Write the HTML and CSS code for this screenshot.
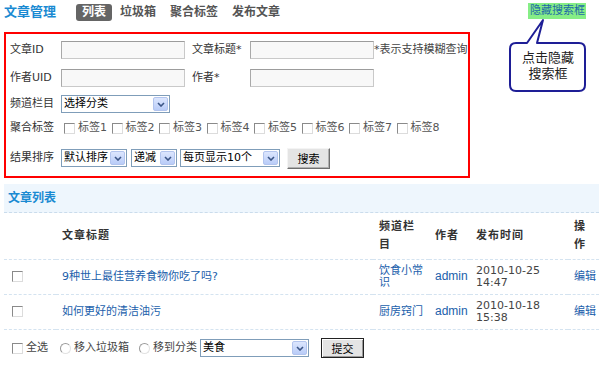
FILE: index.html
```html
<!DOCTYPE html>
<html lang="zh-CN">
<head>
<meta charset="utf-8">
<title>文章管理</title>
<link rel="stylesheet" href="styles.css">
</head>
<body>
<div class="page">
  <header class="topbar">
    <h1 class="title">文章管理</h1>
    <nav class="tabs">
      <a class="tab active">列表</a>
      <a class="tab">垃圾箱</a>
      <a class="tab">聚合标签</a>
      <a class="tab">发布文章</a>
    </nav>
    <a class="toggle">隐藏搜索框</a>
  </header>

  <form class="search">
    <div class="frow r1">
      <label class="flabel">文章ID</label>
      <input class="text" type="text">
      <label class="flabel2">文章标题*</label>
      <input class="text" type="text">
      <span class="hint">*表示支持模糊查询</span>
    </div>
    <div class="frow r2">
      <label class="flabel">作者UID</label>
      <input class="text" type="text">
      <label class="flabel2">作者*</label>
      <input class="text" type="text">
    </div>
    <div class="frow r3">
      <label class="flabel">频道栏目</label>
      <span class="select w109"><span class="select-text">选择分类</span><span class="select-arrow"><svg width="8" height="5" viewBox="0 0 8 5"><path d="M1 1 L4 4 L7 1" fill="none" stroke="#3b5586" stroke-width="1.6"/></svg></span></span>
    </div>
    <div class="frow r4">
      <label class="flabel">聚合标签</label>
      <span class="tags">
        <span class="tag"><input type="checkbox" class="cb">标签1</span>
        <span class="tag"><input type="checkbox" class="cb">标签2</span>
        <span class="tag"><input type="checkbox" class="cb">标签3</span>
        <span class="tag"><input type="checkbox" class="cb">标签4</span>
        <span class="tag"><input type="checkbox" class="cb">标签5</span>
        <span class="tag"><input type="checkbox" class="cb">标签6</span>
        <span class="tag"><input type="checkbox" class="cb">标签7</span>
        <span class="tag"><input type="checkbox" class="cb">标签8</span>
      </span>
    </div>
    <div class="frow r5">
      <label class="flabel">结果排序</label>
      <span class="select w66"><span class="select-text">默认排序</span><span class="select-arrow"><svg width="8" height="5" viewBox="0 0 8 5"><path d="M1 1 L4 4 L7 1" fill="none" stroke="#3b5586" stroke-width="1.6"/></svg></span></span>
      <span class="select w46 gap4"><span class="select-text">递减</span><span class="select-arrow"><svg width="8" height="5" viewBox="0 0 8 5"><path d="M1 1 L4 4 L7 1" fill="none" stroke="#3b5586" stroke-width="1.6"/></svg></span></span>
      <span class="select w100 gap3"><span class="select-text">每页显示10个</span><span class="select-arrow"><svg width="8" height="5" viewBox="0 0 8 5"><path d="M1 1 L4 4 L7 1" fill="none" stroke="#3b5586" stroke-width="1.6"/></svg></span></span>
      <button class="btn search-btn" type="button">搜索</button>
    </div>
  </form>

  <div class="callout">
    <svg class="callout-shape" width="80" height="76" viewBox="0 0 80 76">
      <path d="M8 25 L19 25 L35 2 L29 25 L71 25 Q77 25 77 31 L77 67 Q77 73 71 73 L8 73 Q2 73 2 67 L2 31 Q2 25 8 25 Z" fill="#fff" stroke="#1e1e96" stroke-width="2" stroke-linejoin="round"/>
    </svg>
    <p class="callout-text">点击隐藏搜索框</p>
  </div>

  <section class="list">
    <h2 class="list-title">文章列表</h2>
    <table class="grid">
      <colgroup>
        <col class="c1"><col class="c2"><col class="c3"><col class="c4"><col class="c5"><col class="c6">
      </colgroup>
      <thead>
        <tr>
          <th class="cbcell"></th>
          <th>文章标题</th>
          <th class="narrow">频道栏目</th>
          <th>作者</th>
          <th>发布时间</th>
          <th class="tight">操作</th>
        </tr>
      </thead>
      <tbody>
        <tr>
          <td class="cbcell"><input type="checkbox" class="cb"></td>
          <td><a class="link">9种世上最佳营养食物你吃了吗?</a></td>
          <td class="narrow"><a class="link">饮食小常识</a></td>
          <td><a class="link latin">admin</a></td>
          <td class="date">2010-10-25 14:47</td>
          <td class="tight"><a class="link">编辑</a></td>
        </tr>
        <tr>
          <td class="cbcell"><input type="checkbox" class="cb"></td>
          <td><a class="link">如何更好的清洁油污</a></td>
          <td class="narrow"><a class="link">厨房窍门</a></td>
          <td><a class="link latin">admin</a></td>
          <td class="date">2010-10-18 15:38</td>
          <td class="tight"><a class="link">编辑</a></td>
        </tr>
      </tbody>
    </table>

    <div class="actions">
      <label class="act a1"><input type="checkbox" class="cb">全选</label>
      <label class="act a2"><input type="radio" name="op" class="rd">移入垃圾箱</label>
      <label class="act a3"><input type="radio" name="op" class="rd">移到分类</label>
      <span class="select w109"><span class="select-text">美食</span><span class="select-arrow"><svg width="8" height="5" viewBox="0 0 8 5"><path d="M1 1 L4 4 L7 1" fill="none" stroke="#3b5586" stroke-width="1.6"/></svg></span></span>
      <button class="btn submit-btn" type="button">提交</button>
    </div>
  </section>
</div>
</body>
</html>
```

FILE: styles.css
```css
* { box-sizing: border-box; }

body {
  margin: 0;
  font-family: "DejaVu Sans", "Noto Sans CJK SC", sans-serif;
  font-size: 11px;
  line-height: 14px;
  color: #333;
  background: #fff;
}

.page {
  position: relative;
  width: 599px;
  padding-left: 4px;
}

/* top bar */
.topbar {
  display: flex;
  align-items: center;
  height: 24px;
  padding-right: 13px;
}

.title {
  margin: 0 20px 0 0;
  font-size: 13px;
  font-weight: bold;
  line-height: 18px;
  color: #1a8ad2;
}

.tabs {
  display: flex;
  gap: 2px;
}

.tab {
  display: block;
  padding: 0 6px;
  height: 17px;
  line-height: 17px;
  font-size: 12px;
  font-weight: bold;
  color: #555;
  border-radius: 3px;
}

.tab.active {
  background: #656565;
  color: #fff;
}

.toggle {
  margin-left: auto;
  align-self: flex-start;
  margin-top: 3px;
  padding: 0 1px 0 2px;
  height: 16px;
  line-height: 16px;
  font-size: 11px;
  color: #1d6aa8;
  background: #86ee86;
}

/* search box */
.search {
  margin: 8px 0 0;
  width: 466px;
  height: 146px;
  border: 2px solid #f00;
  padding-left: 4px;
}

.frow {
  display: flex;
  align-items: center;
  height: 20px;
}
.r1 { margin-top: 6px; }
.r2 { margin-top: 8px; }
.r3 { margin-top: 6px; }
.r4 { margin-top: 4px; }
.r5 { margin-top: 9px; height: 22px; }

.flabel {
  width: 51px;
  flex: none;
}

.flabel2 {
  width: 58px;
  margin-left: 7px;
  flex: none;
}

.text {
  width: 124px;
  height: 18px;
  margin: 0;
  padding: 0 2px;
  border: 1px solid #c9c9c9;
  border-top-color: #9c9c9c;
  border-left-color: #a9a9a9;
  background: #f8f8f8;
  font: inherit;
}

.hint {
  white-space: nowrap;
  color: #444;
}

/* selects */
.select {
  display: inline-flex;
  height: 18px;
  border: 1px solid #7f9db9;
  background: #fff;
  flex: none;
}
.w109 { width: 109px; }
.w66 { width: 66px; }
.w46 { width: 46px; }
.w100 { width: 100px; }
.gap4 { margin-left: 4px; }
.gap3 { margin-left: 3px; }

.select-text {
  flex: 1;
  padding-left: 2px;
  line-height: 16px;
  color: #000;
  white-space: nowrap;
  overflow: hidden;
}

.select-arrow {
  display: flex;
  align-items: center;
  justify-content: center;
  width: 15px;
  margin: 1px;
  border-radius: 2px;
  background: linear-gradient(#dce6fe, #b9ccf8);
  border: 1px solid #b2c4ee;
}

/* checkboxes and radios */
.cb, .rd {
  appearance: none;
  -webkit-appearance: none;
  width: 11px;
  height: 11px;
  margin: 0;
  background: #fff;
  border: 1px solid;
  border-color: #8a8a8a #dcdcdc #dcdcdc #8a8a8a;
  flex: none;
}
.rd { border-radius: 50%; border-color: #9a9a9a #e2e2e2 #e2e2e2 #9a9a9a; }

.tags {
  display: flex;
  align-items: center;
  margin-left: 3px;
}

.tag {
  display: inline-flex;
  align-items: center;
  margin-right: 4.5px;
  color: #555;
}
.tag .cb { margin-right: 3px; }

/* buttons */
.btn {
  margin: 0;
  padding: 0;
  font-family: "Noto Sans CJK SC", sans-serif;
  font-size: 11px;
  color: #000;
  background: #e4e4e4;
  flex: none;
}

.search-btn {
  margin-left: 7px;
  width: 43px;
  height: 21px;
  border: 1px solid;
  border-color: #f4f4f4 #6f6f6f #6f6f6f #f4f4f4;
  box-shadow: inset -1px -1px 0 #b0b0b0;
}

.submit-btn {
  margin-left: 12px;
  width: 43px;
  height: 20px;
  border: 1px solid #222;
  box-shadow: inset 1px 1px 0 #fff, inset -1px -1px 0 #999;
}

/* callout */
.callout {
  position: absolute;
  left: 508px;
  top: 18px;
  width: 80px;
  height: 76px;
  display: grid;
}
.callout-shape, .callout-text { grid-area: 1 / 1; }
.callout-text {
  justify-self: center;
  width: 56px;
  margin: 31px 0 0;
  text-align: center;
  font-family: "Noto Sans CJK SC", sans-serif;
  font-size: 13px;
  line-height: 16px;
  color: #222;
}

/* list */
.list { margin-top: 6px; }

.list-title {
  margin: 0;
  height: 29px;
  line-height: 28px;
  padding-left: 4px;
  font-size: 12px;
  font-weight: bold;
  color: #1a8ad2;
  background: #eef6fd;
  border-bottom: 1px dashed #cadcec;
}

.grid {
  width: 595px;
  table-layout: fixed;
  border-collapse: collapse;
}
.c1 { width: 52px; }
.c2 { width: 317px; }
.c3 { width: 56px; }
.c4 { width: 41px; }
.c5 { width: 98px; }
.c6 { width: 31px; }

.grid th, .grid td {
  padding: 0 0 0 6px;
  text-align: left;
  vertical-align: middle;
  border-bottom: 1px dashed #d4e3f0;
}

.grid th {
  height: 46px;
  font-weight: bold;
  line-height: 18px;
  letter-spacing: 1px;
  color: #333;
}

.grid td {
  height: 35px;
  line-height: 12px;
}

.grid .cbcell { padding-left: 8px; }
.grid .cbcell .cb { display: block; }
.grid .narrow { padding-right: 4px; }
.grid .tight { padding-right: 2px; }
.grid td.tight { white-space: nowrap; }

.link {
  color: #2160ab;
  text-decoration: none;
}
.latin {
  font-family: "Liberation Sans", sans-serif;
  font-size: 12px;
}

.date {
  color: #444;
  padding-right: 6px;
}

/* bottom actions */
.actions {
  display: flex;
  align-items: center;
  height: 21px;
  margin-top: 8px;
  padding-left: 8px;
}

.act {
  display: inline-flex;
  align-items: center;
  color: #444;
}
.act .cb, .act .rd { margin-right: 3px; }
.a1 { margin-right: 12px; }
.a2 { margin-right: 10px; }
.a3 { margin-right: 3px; }
```
